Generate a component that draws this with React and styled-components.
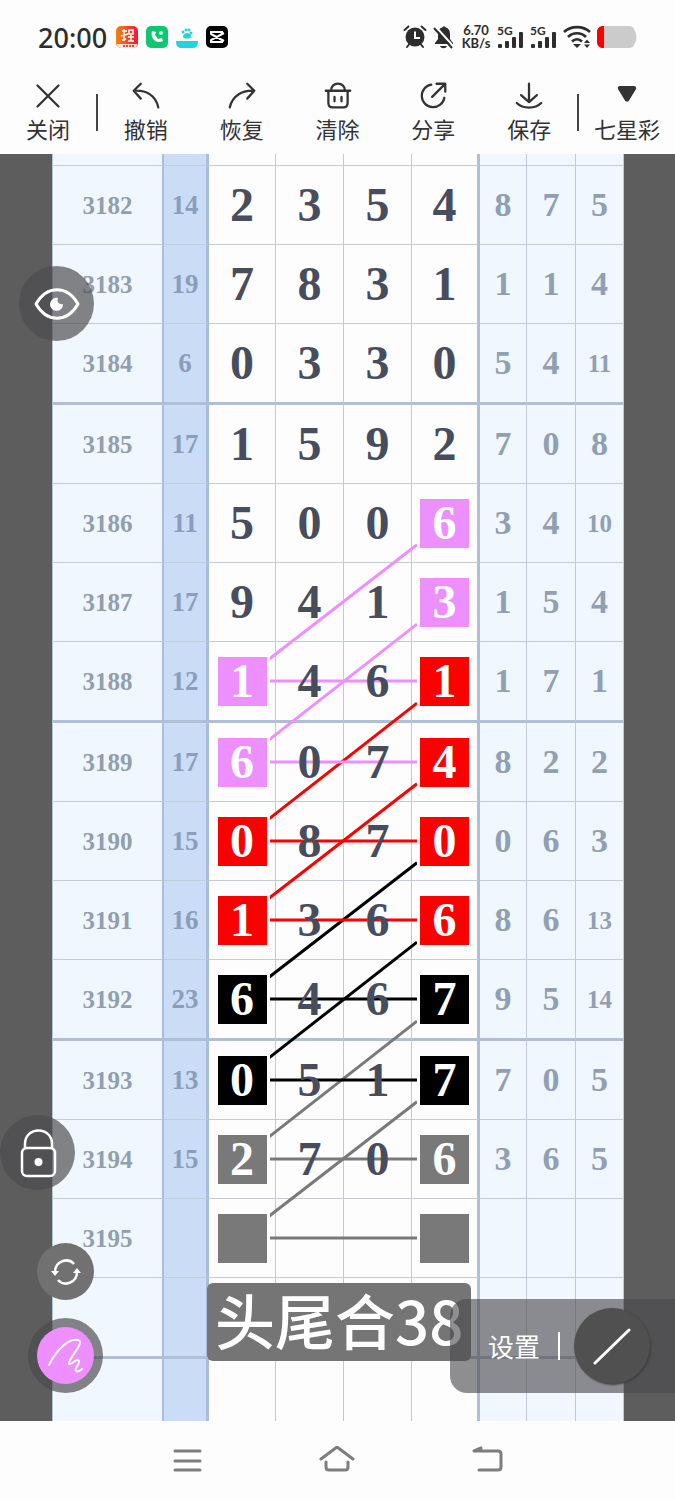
import React from 'react'
import styled, { createGlobalStyle } from 'styled-components'

const PINK = '#ee8fff'
const RED = '#fb0000'
const BLACK = '#000000'
const GRAY = '#797979'

const rows = [
    { id: '3182', sum: '14', nums: '2354', tail: ['8', '7', '5'] },
    { id: '3183', sum: '19', nums: '7831', tail: ['1', '1', '4'] },
    { id: '3184', sum: '6', nums: '0330', tail: ['5', '4', '11'] },
    { id: '3185', sum: '17', nums: '1592', tail: ['7', '0', '8'] },
    { id: '3186', sum: '11', nums: '5006', tail: ['3', '4', '10'], last: PINK },
    { id: '3187', sum: '17', nums: '9413', tail: ['1', '5', '4'], last: PINK },
    { id: '3188', sum: '12', nums: '1461', tail: ['1', '7', '1'], first: PINK, last: RED },
    { id: '3189', sum: '17', nums: '6074', tail: ['8', '2', '2'], first: PINK, last: RED },
    { id: '3190', sum: '15', nums: '0870', tail: ['0', '6', '3'], first: RED, last: RED },
    { id: '3191', sum: '16', nums: '1366', tail: ['8', '6', '13'], first: RED, last: RED },
    { id: '3192', sum: '23', nums: '6467', tail: ['9', '5', '14'], first: BLACK, last: BLACK },
    { id: '3193', sum: '13', nums: '0517', tail: ['7', '0', '5'], first: BLACK, last: BLACK },
    { id: '3194', sum: '15', nums: '2706', tail: ['3', '6', '5'], first: GRAY, last: GRAY },
    { id: '3195', sum: '', nums: '    ', tail: ['', '', ''], first: GRAY, last: GRAY },
    { id: '', sum: '', nums: '    ', tail: ['', '', ''] },
]

const columns = [112, 45, 67, 68, 68, 68, 47, 49, 48]

const isThick = (i) => i % 4 === 2
const rowCenter = (i) => 12 + 79 * i + 2 * Math.floor((i + 1) / 4) + 39

// every marked first number is joined to its own row and to the last number two rows up
const links = rows
    .map((row, i) => ({ color: row.first, i }))
    .filter((link) => link.color)

const Links = () => (
    <LinkLayer viewBox="0 0 572 1267" preserveAspectRatio="none">
        {links.map(({ color, i }) => {
            const from = rowCenter(i)
            const rise = from - rowCenter(i - 2)
            const cut = rise * 28 / 203
            return <line key={'d' + i} x1="217" y1={from - cut} x2="365" y2={from - rise + cut} stroke={color} />
        })}
        {links.map(({ color, i }) => (
            <line key={'h' + i} x1="217" y1={rowCenter(i)} x2="365" y2={rowCenter(i)} stroke={color} />
        ))}
    </LinkLayer>
)

const Digit = ({ value, mark }) => {
    if (mark) {
        return <Mark $color={mark}>{value.trim()}</Mark>
    }
    return <Num>{value.trim()}</Num>
}

const StatusBar = () => (
    <Status>
        <Clock>20:00</Clock>
        <AppIcons>
            <svg width="23" height="23" viewBox="0 0 23 23">
                <defs>
                    <linearGradient id="hot" x1="0" y1="0" x2="1" y2="0">
                        <stop offset="0" stopColor="#f8810f" />
                        <stop offset="1" stopColor="#f5153a" />
                    </linearGradient>
                </defs>
                <rect width="22" height="22" rx="5" fill="url(#hot)" />
                <path d="M1 18h20c0 3-2 4-5 4H6c-3 0-5-1-5-4z" fill="#ffe3d8" />
                <path d="M7 20h12" stroke="#e84a3a" strokeWidth="2" strokeDasharray="2 1" />
                <path d="M6 5h5M8 3v12M5 10l7-2M13 4h4v4h-4zM12 11h6M15 9v6M6 14l4-1M12 15h6" stroke="#fff" strokeWidth="1.500" fill="none" />
            </svg>
            <svg width="23" height="23" viewBox="0 0 23 23">
                <rect width="22" height="22" rx="5" fill="#0fc772" />
                <path d="M6 5c-2 8 4 13 11 10l-1-3-4 1-3-4 1-3z" fill="#fff" />
                <circle cx="15" cy="7" r="2" fill="#c9f5df" />
            </svg>
            <svg width="23" height="23" viewBox="0 0 23 23">
                <path d="M0 15h22c0 5-2 7-5 7H5c-3 0-5-2-5-7z" fill="#24d3dc" />
                <path d="M7 11c0-3 2-4 4-4s4 1 4 4c0 2-8 2-8 0z" fill="#24d3dc" />
                <circle cx="7" cy="6" r="1.500" fill="#24d3dc" />
                <circle cx="10" cy="4" r="1.500" fill="#24d3dc" />
                <circle cx="13" cy="4" r="1.500" fill="#24d3dc" />
                <circle cx="15" cy="7" r="1.500" fill="#24d3dc" />
            </svg>
            <svg width="23" height="23" viewBox="0 0 23 23">
                <rect width="22" height="22" rx="5" fill="#000" />
                <path d="M18 7L5 14v2h11v-2L5 8V6h11v2M5 8l13 7" stroke="#fff" strokeWidth="2" fill="none" />
            </svg>
        </AppIcons>
        <StatusIcons>
            <svg width="24" height="24" viewBox="0 0 24 24" fill="none" stroke="#2d2d2d" strokeWidth="2">
                <circle cx="12" cy="12" r="9.500" fill="#2d2d2d" stroke="none" />
                <path d="M1.500 5l4-3.500M22.500 5l-4-3.500M4 22l2-2.500M20 22l-2-2.500" strokeLinecap="round" />
                <path d="M12 6.500V13h5" stroke="#fff" />
            </svg>
            <svg width="22" height="24" viewBox="0 0 22 24">
                <path d="M2 18l3-4V9c0-4 2-6 5-7 0-1 2-1 2 0 3 1 5 3 5 7v5l3 4v1H2z" fill="#2d2d2d" />
                <path d="M7 21h7c-1 3-6 3-7 0z" fill="#2d2d2d" />
                <path d="M3 2l18 20" stroke="#fff" strokeWidth="2" />
                <path d="M1 3l18 20" stroke="#2d2d2d" strokeWidth="2" />
            </svg>
            <Speed>
                <span>6.70</span>
                <span>KB/s</span>
            </Speed>
            {[0, 1].map((sim) => (
                <Signal key={sim}>
                    <span>5G</span>
                    <svg width="26" height="17" viewBox="0 0 26 17" fill="#2d2d2d">
                        <rect x="1" y="12" width="4" height="4" rx="1" />
                        <rect x="8" y="9" width="4" height="7" rx="1" />
                        <rect x="15" y="5" width="4" height="11" rx="1" />
                        <rect x="22" y="0" width="4" height="16" rx="1" />
                    </svg>
                </Signal>
            ))}
            <svg width="28" height="24" viewBox="0 0 28 24" fill="none" stroke="#2d2d2d" strokeWidth="2.600">
                <path d="M1 7c7-6.500 19-6.500 26 0M5 12c5-5 13-5 18 0M9 16.500c3-3 7-3 10 0" />
                <path d="M10 19h8l-4 4z" fill="#2d2d2d" stroke="none" />
                <path d="M21 18l3-3.500 3 3.500zM21 19.500l3 3.500 3-3.500z" fill="#2d2d2d" stroke="none" />
            </svg>
            <svg width="40" height="23" viewBox="0 0 40 23">
                <rect x="0" y="0" width="38" height="22" rx="6" fill="#cbcbcb" />
                <path d="M38 5c2 4 2 8 0 12z" fill="#cbcbcb" />
                <path d="M7 0v22H6c-3 0-6-2-6-6V6c0-4 3-6 6-6z" fill="#fb0000" />
            </svg>
        </StatusIcons>
    </Status>
)

const ToolIcon = ({ children }) => (
    <svg viewBox="0 0 32 32" fill="none" stroke="#333" strokeWidth="2.600" strokeLinecap="round" strokeLinejoin="round">
        {children}
    </svg>
)

const Toolbar = () => (
    <Tools>
        <Tool>
            <ToolIcon><path d="M4 4l24 24M28 4L4 28" /></ToolIcon>
            关闭
        </Tool>
        <Divider />
        <Tool>
            <ToolIcon><path d="M10 2L2 10l8 9M2 10c14-1 25 5 28 19" /></ToolIcon>
            撤销
        </Tool>
        <Tool>
            <ToolIcon><path d="M22 2l8 8-8 9M30 10C16 9 5 16 2 29" /></ToolIcon>
            恢复
        </Tool>
        <Tool>
            <ToolIcon><path d="M2 10h28M8 10c0-11 16-11 16 0M5 10v14c0 3 2 5 5 5h12c3 0 5-2 5-5V10M12 17v5M20 17v5" /></ToolIcon>
            清除
        </Tool>
        <Tool>
            <ToolIcon><path d="M14 3A13 13 0 1 0 29 18M15 17L29 3M20 2h10v9" /></ToolIcon>
            分享
        </Tool>
        <Tool>
            <ToolIcon><path d="M16 2v21M7 15l9 8 9-8M2 24c7 7 21 7 28 0" /></ToolIcon>
            保存
        </Tool>
        <Divider />
        <Tool>
            <ToolIcon><path d="M8 7h16l-8 13z" fill="#333" strokeWidth="5" /></ToolIcon>
            七星彩
        </Tool>
    </Tools>
)

const App = () => {
    return (
        <Page>
            <GlobalStyle />
            <StatusBar />
            <Toolbar />

            <Board>
                <Sheet>
                    <Table>
                        <colgroup>
                            {columns.map((w, i) => <col key={i} width={w} />)}
                        </colgroup>
                        <tbody>
                            <Row $height={12}>
                                {columns.map((w, i) => <Cell key={i} $col={i} />)}
                            </Row>
                            {rows.map((row, i) => (
                                <Row key={i} $height={isThick(i) ? 81 : 79} $thick={isThick(i)}>
                                    <Cell $col={0}>{row.id}</Cell>
                                    <Cell $col={1}>{row.sum}</Cell>
                                    {row.nums.split('').map((n, k) => (
                                        <Cell key={k} $col={k + 2}>
                                            <Digit value={n} mark={k === 0 ? row.first : k === 3 ? row.last : null} />
                                        </Cell>
                                    ))}
                                    {row.tail.map((n, k) => (
                                        <Cell key={k} $col={k + 6} $small={n.length > 1}>{n}</Cell>
                                    ))}
                                </Row>
                            ))}
                            <Row $height={62} $open>
                                {columns.map((w, i) => <Cell key={i} $col={i} />)}
                            </Row>
                        </tbody>
                    </Table>
                    <Links />
                </Sheet>

                <Note>头尾合38</Note>

                <EyeButton aria-label="显示">
                    <svg width="48" height="36" viewBox="0 0 48 36" fill="none" stroke="#fff" strokeWidth="3">
                        <path d="M3 18C14-1 34-1 45 18 34 37 14 37 3 18z" strokeLinejoin="round" />
                        <path d="M25 12a6.500 6.500 0 1 0 5 6c-3 1-7-2-5-6z" fill="#fff" stroke="none" />
                    </svg>
                </EyeButton>
                <LockButton aria-label="锁定">
                    <svg width="38" height="50" viewBox="0 0 38 50" fill="none" stroke="#fff" strokeWidth="2.500">
                        <rect x="3" y="20" width="33" height="28" rx="5" />
                        <path d="M6 20v-4c0-18 27-18 27 0v4" />
                        <circle cx="19.500" cy="34" r="4" fill="#fff" stroke="none" />
                    </svg>
                </LockButton>
                <RefreshButton aria-label="刷新">
                    <svg width="30" height="28" viewBox="0 0 30 28" fill="none" stroke="#fff" strokeWidth="2.500">
                        <path d="M4 14C4 3 17-1 23 6M26 14c0 11-13 15-19 8" />
                        <path d="M0 13h8l-4 5zM22 15h8l-4-5z" fill="#fff" stroke="none" />
                    </svg>
                </RefreshButton>
                <PenButton aria-label="画笔">
                    <PenColor>
                        <svg width="38" height="38" viewBox="0 0 38 38" fill="none" stroke="#fff" strokeWidth="2" strokeLinecap="round" strokeLinejoin="round">
                            <path d="M2 28C10 12 22 1 31 3c8 2-11 20-9 24 2 2 8-7 10-3 1 3-5 7-3 10 1 1 4 0 6-2" />
                        </svg>
                    </PenColor>
                </PenButton>

                <Settings>
                    <SettingsButton>设置</SettingsButton>
                    <SettingsDivider />
                    <LineButton aria-label="直线">
                        <svg width="38" height="38" viewBox="0 0 38 38" fill="none" stroke="#fff" strokeWidth="3" strokeLinecap="round">
                            <path d="M2 36L36 3" />
                        </svg>
                    </LineButton>
                </Settings>
            </Board>

            <NavBar>
                <NavButton aria-label="菜单">
                    <svg width="30" height="30" viewBox="0 0 30 30">
                        <path d="M3 5h25M3 15h25M3 24h25" />
                    </svg>
                </NavButton>
                <NavButton aria-label="主页">
                    <svg width="38" height="30" viewBox="0 0 38 30">
                        <path d="M3 13L19 1l16 12M8 16v5c0 2 1 3 3 3h16c2 0 3-1 3-3v-5" />
                    </svg>
                </NavButton>
                <NavButton aria-label="返回">
                    <svg width="32" height="30" viewBox="0 0 32 30">
                        <path d="M9 2L2 5h24c2 0 3 1 3 3v13c0 2-1 3-3 3H7" />
                    </svg>
                </NavButton>
            </NavBar>
        </Page>
    )
}

export default App


const GlobalStyle = createGlobalStyle`
    body{
        margin: 0;
        background-color: #fdfdfd;
        font-family: "Noto Sans", "Noto Sans CJK SC", sans-serif;
    }

    button{
        border: none;
        padding: 0;
        margin: 0;
        background: none;
        color: inherit;
        font-family: inherit;
        cursor: pointer;
    }

    svg{
        display: block;
    }
`

const Page = styled.div`
    width: 100%;
    min-height: 100vh;
    display: flex;
    flex-direction: column;
    background-color: #fdfdfd;
`

const Status = styled.header`
    height: 74px;
    padding: 0 38px;
    display: flex;
    align-items: center;
    color: #2d2d2d;
`

const Clock = styled.span`
    font-size: 27px;
    font-weight: 500;
`

const AppIcons = styled.div`
    display: flex;
    gap: 7px;
    margin-left: 9px;
`

const StatusIcons = styled.div`
    display: flex;
    align-items: center;
    gap: 6px;
    margin-left: auto;
`

const Speed = styled.div`
    display: flex;
    flex-direction: column;
    align-items: center;
    width: 30px;
    font-family: Lato, sans-serif;
    font-size: 13px;
    line-height: 13px;
    font-weight: 700;
`

const Signal = styled.div`
    position: relative;
    width: 27px;
    height: 24px;
    display: flex;
    align-items: flex-end;

    span{
        position: absolute;
        top: 0;
        left: 0;
        font-family: Lato, sans-serif;
        font-size: 12px;
        line-height: 11px;
        font-weight: 700;
    }
`

const Tools = styled.nav`
    height: 80px;
    display: flex;
    align-items: flex-start;
    color: #333;
`

const Tool = styled.button`
    flex: 1;
    display: flex;
    flex-direction: column;
    align-items: center;
    gap: 4px;
    padding-top: 8px;
    font-family: "Noto Sans CJK SC", sans-serif;
    font-size: 22px;
    font-weight: 400;
    line-height: 28px;
    white-space: nowrap;

    svg{
        width: 28px;
        height: 28px;
    }
`

const Divider = styled.span`
    width: 2px;
    height: 37px;
    margin-top: 20px;
    background-color: #444;
`

const Board = styled.main`
    position: relative;
    padding: 0 51px 0 52px;
    overflow: hidden;
    background-color: #5d5d5d;
`

const Sheet = styled.div`
    position: relative;
`

const Table = styled.table`
    width: 100%;
    table-layout: fixed;
    border-collapse: separate;
    border-spacing: 0;
    font-family: "Liberation Serif", serif;
    font-weight: 700;
`

const Cell = styled.td`
    padding: 0;
    text-align: center;
    vertical-align: middle;
    line-height: 1;
    border-right: 1px solid #c3c9d6;
    border-bottom: 1px solid #c3cbd8;

    ${({ $col }) => $col >= 2 && $col <= 5 && `
        background-color: #fdfdfd;
    `}

    ${({ $col }) => $col === 0 && `
        background-color: #f0f7fe;
        color: #929eae;
        font-size: 25px;
        border-left: 1px solid #b4c2d6;
        border-right: 2px solid #a9bddd;
    `}

    ${({ $col }) => $col === 1 && `
        background-color: #cbddf6;
        color: #8a9dbd;
        font-size: 27px;
        border-right: 3px solid #a9bddd;
    `}

    ${({ $col }) => $col === 5 && `
        border-right: 3px solid #b1bed6;
    `}

    ${({ $col, $small }) => $col >= 6 && `
        background-color: #f0f7fe;
        color: #919fb2;
        font-size: ${$small ? 25 : 34}px;
    `}
`

const Row = styled.tr`
    height: ${({ $height }) => $height}px;

    ${({ $thick }) => $thick && `
        td{
            border-bottom: 3px solid #afbfd5;
        }
    `}

    ${({ $open }) => $open && `
        td{
            border-bottom: none;
        }
    `}
`

const Num = styled.span`
    position: relative;
    z-index: 2;
    color: #484d5d;
    font-size: 48px;
`

const Mark = styled.span`
    position: relative;
    z-index: 2;
    display: flex;
    align-items: center;
    justify-content: center;
    width: 49px;
    height: 49px;
    margin: 0 auto;
    color: white;
    font-size: 48px;
    background-color: ${({ $color }) => $color};
    box-shadow: 0 0 0 3px #fdfdfd;
`

const LinkLayer = styled.svg`
    position: absolute;
    top: 0;
    left: 0;
    z-index: 1;
    width: 100%;
    height: 100%;
    pointer-events: none;

    line{
        stroke-width: 3px;
    }
`

const Note = styled.div`
    position: absolute;
    z-index: 3;
    left: 207px;
    top: 1129px;
    padding: 0 8px 6px;
    border-radius: 6px;
    background-color: #757575;
    color: white;
    font-family: "Noto Sans CJK SC", sans-serif;
    font-size: 60px;
    font-weight: 500;
    line-height: 72px;
    white-space: nowrap;
`

const FloatButton = styled.button`
    position: absolute;
    z-index: 4;
    width: 75px;
    height: 75px;
    border-radius: 50%;
    display: flex;
    align-items: center;
    justify-content: center;
    background-color: rgba(75, 73, 76, 0.68);
`

const EyeButton = styled(FloatButton)`
    left: 19px;
    top: 112px;
`

const LockButton = styled(FloatButton)`
    left: 0;
    top: 961px;
`

const RefreshButton = styled(FloatButton)`
    left: 37px;
    top: 1089px;
    width: 57px;
    height: 57px;
    background-color: #717171;
`

const PenButton = styled(FloatButton)`
    left: 28px;
    top: 1164px;
`

const PenColor = styled.span`
    width: 57px;
    height: 57px;
    border-radius: 50%;
    display: flex;
    align-items: center;
    justify-content: center;
    background-color: ${PINK};
`

const Settings = styled.div`
    position: absolute;
    z-index: 4;
    right: 0;
    top: 1145px;
    height: 94px;
    padding-left: 38px;
    padding-right: 25px;
    display: flex;
    align-items: center;
    border-radius: 17px 0 0 17px;
    background-color: rgba(75, 72, 76, 0.62);
    color: white;
`

const SettingsButton = styled.button`
    font-family: "Noto Sans CJK SC", sans-serif;
    font-size: 26px;
    line-height: 36px;
`

const SettingsDivider = styled.span`
    width: 2px;
    height: 28px;
    margin: 0 14px 0 18px;
    background-color: white;
`

const LineButton = styled.button`
    width: 76px;
    height: 76px;
    border-radius: 50%;
    display: flex;
    align-items: center;
    justify-content: center;
    background-color: #505050;
    box-shadow: 1px 1px 2px #3c3c3c;
`

const NavBar = styled.footer`
    height: 79px;
    display: flex;
    align-items: center;
    justify-content: center;
    gap: 116px;
`

const NavButton = styled.button`
    path{
        fill: none;
        stroke: #7d7d7d;
        stroke-width: 3px;
        stroke-linecap: round;
        stroke-linejoin: round;
    }
`
